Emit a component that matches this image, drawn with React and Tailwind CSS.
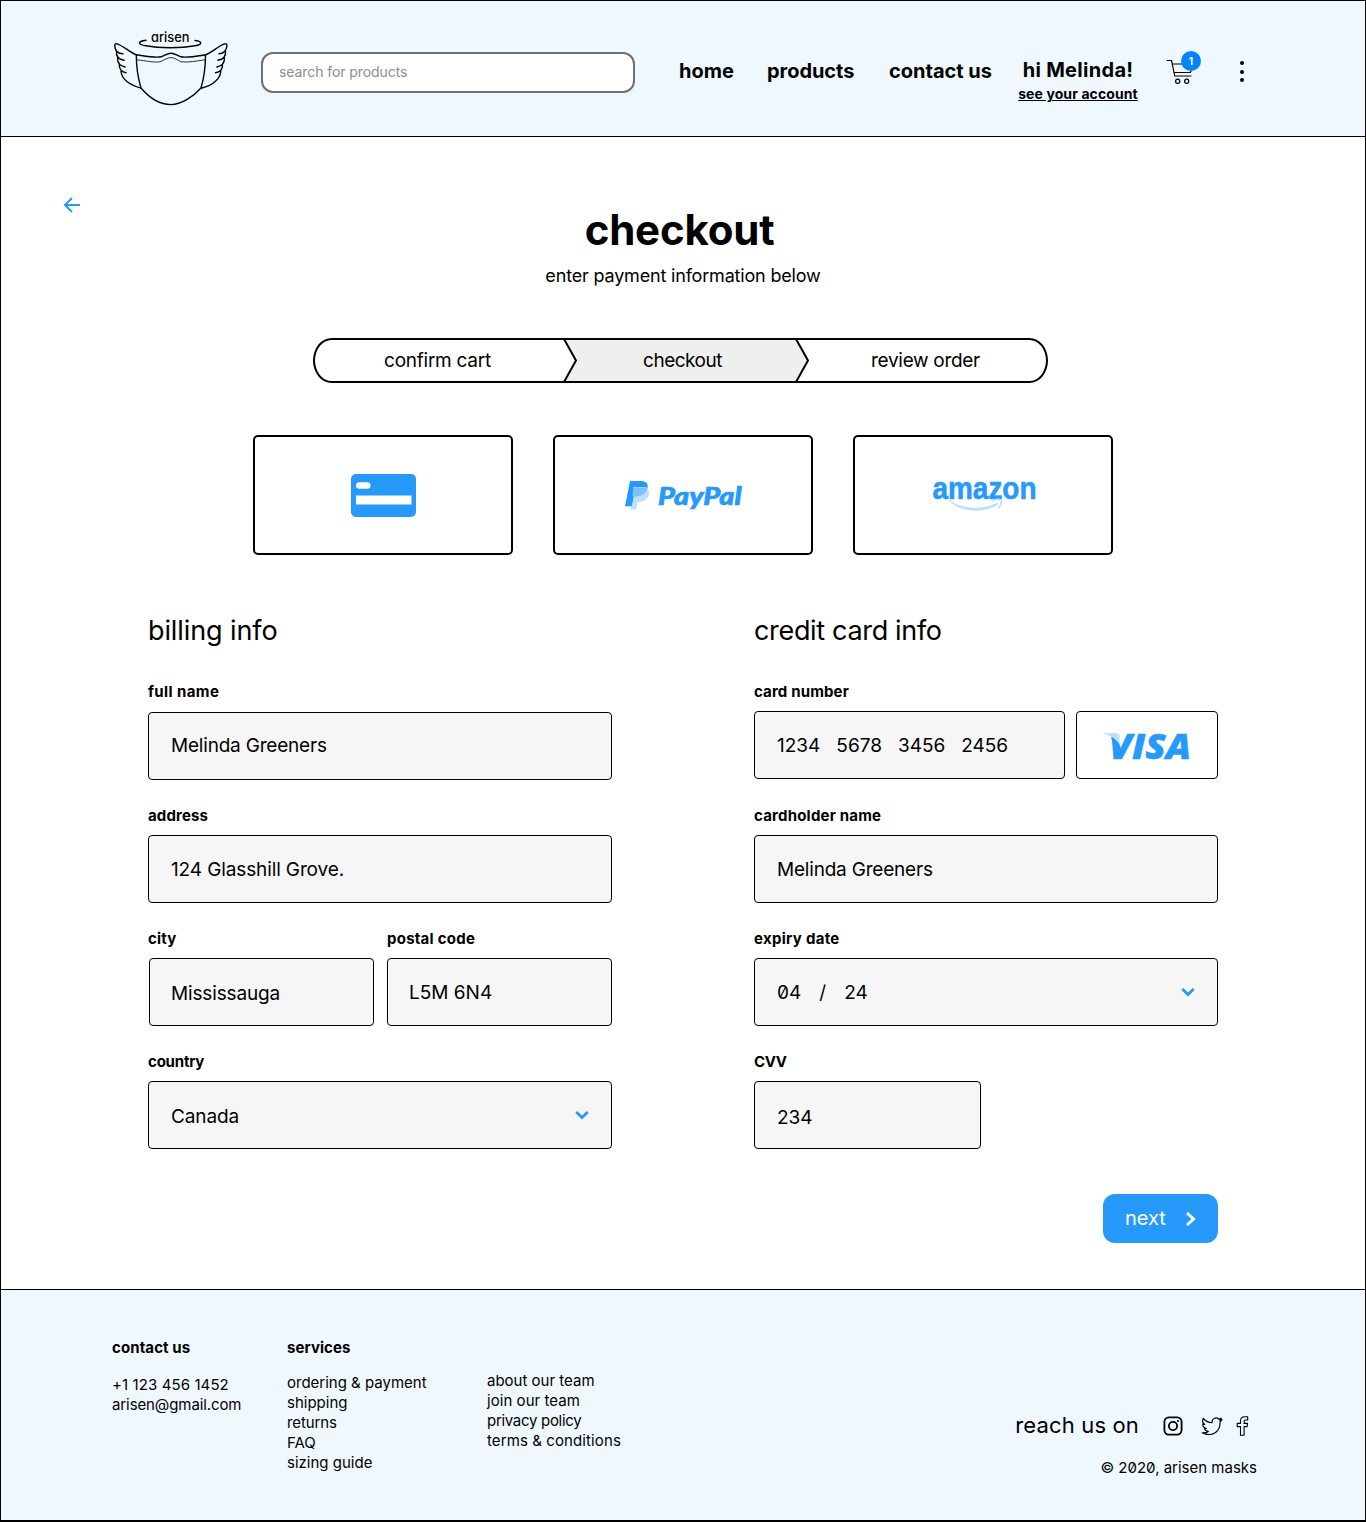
import React from "react";

function MaskLogo() {
  return (
    <svg width="118" height="78" viewBox="112 30 118 78" fill="none" stroke="#000" strokeWidth="1.4" strokeLinecap="round" strokeLinejoin="round">
      <path d="M146 40.3C137 41.5 137.500 44.500 146 45.800C159 48.300 181 48.300 195 45.800C203 44.300 202.500 41.500 195 40.500" />
      <text className="[font-feature-settings:'cv11']" x="151" y="42" fill="#000" stroke="none" fontFamily="Inter, sans-serif" fontSize="13" fontWeight="500" textLength="38.500" lengthAdjust="spacingAndGlyphs">arisen</text>
      <path d="M136.300 54.800C148 56.500 156 58 161 56.800C165 55.500 167 53.200 171 53.200C175 53.200 177 55.500 181 56.800C187 58 195 56.500 205.500 54.800C205.500 68 204 78 201 88C193 97 181 104.600 171 104.600C160 104.600 149 97.500 141 88C138 78 136.300 68 136.300 54.800Z" />
      <path strokeWidth="0.8" d="M137 59.800C147 61 155 62.700 160 61.800C165 60 167 57.600 171 57.600C175 57.600 177 60 181 61.800C188 62.700 196 61 205 59.800" />
      <path d="M136.300 54.800C129 52 122 44.500 116 43.600C114 44 114.500 48.500 117 51.500C118.500 53.200 121 53.800 123 53.800M116.500 51.500C116 55.500 118 59 124 60.300M117.500 58C117.500 62.500 120 66 125 67M119.200 65C119.500 69.500 121.500 72 126 72.700M121 71.500C122 80 130 85 141 88.200" />
      <path d="M205.500 54.800C213 52 220 44.500 225.500 43.600C228 44 227 48.500 224.500 51.500C223 53.200 221 53.800 219 53.800M225.500 51.500C226 55.500 224 59 218 60.300M224.500 58C224.500 62.500 222 66 217 67M222.500 65C222.500 69.500 220.500 72 215.500 72.700M220.800 71.500C220 80 211 86 201 88.200" />
    </svg>
  );
}

function Cart() {
  return (
    <svg width="28" height="26" viewBox="0 0 28 26" fill="none" stroke="#000" strokeWidth="1.200" strokeLinecap="round">
      <path d="M1 2.500H5.500L8.800 18H25M6.700 6H16M8 14.500H24.500L25 13" />
      <circle cx="11.700" cy="23.300" r="2.100" />
      <circle cx="20.700" cy="23.300" r="2.100" />
    </svg>
  );
}

function Chevron() {
  return (
    <svg className="shrink-0" width="14" height="10" viewBox="0 0 14 10" fill="none" stroke="#2699fb" strokeWidth="2.800">
      <path d="M1.300 2L7 7.500L12.700 2" />
    </svg>
  );
}

function StepArrow({ fill, className }) {
  return (
    <svg className={"block shrink-0 overflow-visible " + className} width="14" height="41" viewBox="0 0 14 41">
      <path d="M0 0H1.500L13 20.500L1.500 41H0Z" fill={fill} />
      <path d="M1 -1L13 20.500L1 42" fill="none" stroke="#000" strokeWidth="2" />
    </svg>
  );
}

function CreditCard() {
  return (
    <svg width="65" height="43" viewBox="0 0 65 43">
      <rect width="65" height="43" rx="5" fill="#2699fb" />
      <rect x="5" y="8.300" width="14.500" height="6.500" rx="3.200" fill="#fff" />
      <rect x="5" y="21.500" width="55.500" height="9" fill="#fff" />
    </svg>
  );
}

function PayPal() {
  return (
    <svg className="overflow-visible" width="118" height="34" viewBox="624 479 118 34">
      <path d="M630 481H641C647 481 649 485 647 489.500C645.500 494 642 496.500 636.500 496.500H634L632 506.300H625Z" fill="#2699fb" />
      <path d="M633.500 487H645.500C649.500 489 650 494 648 497C646 500.500 642.500 502 638.500 502H637.500L636 509.500H630.500L631 506.300H632L634 496.500Z" fill="#bcdfff" />
      <path d="M633.300 487.500H647.300C647.300 492 643 496.500 636.500 496.500H632.500Z" fill="#7dc1fb" />
      <text x="658" y="505" fill="#2699fb" stroke="#2699fb" strokeWidth="0.7" fontFamily="Lato, sans-serif" fontWeight="900" fontStyle="italic" fontSize="24" textLength="83.500" lengthAdjust="spacingAndGlyphs">PayPal</text>
    </svg>
  );
}

function Amazon() {
  return (
    <svg className="overflow-visible" width="104" height="40" viewBox="931 473 104 40">
      <text x="931.500" y="497.500" fill="#2699fb" stroke="#2699fb" strokeWidth="0.6" fontFamily="Liberation Sans, sans-serif" fontWeight="700" fontSize="31" textLength="104" lengthAdjust="spacingAndGlyphs">amazon</text>
      <path d="M947.500 499C961 508 981 509.500 995.500 502C997 501.500 997.800 503 996.500 504C982 512.500 961 512 947.500 499.800Z" fill="#bcdfff" />
      <path d="M991.500 500C994 498.200 998 498 1000 498.900C1001 501 999.500 505 997.500 507" stroke="#bcdfff" strokeWidth="1.800" fill="none" />
    </svg>
  );
}

function Visa() {
  return (
    <svg className="overflow-visible" width="88" height="28" viewBox="1103 732 88 28">
      <text x="1109" y="759" fill="#2699fb" stroke="#2699fb" strokeWidth="0.5" fontFamily="Open Sans, sans-serif" fontWeight="800" fontStyle="italic" fontSize="36" textLength="82" lengthAdjust="spacingAndGlyphs">VISA</text>
      <path d="M1109 731H1118.500L1121 748C1118 741 1114 737 1109 735Z" fill="#fff" />
      <path d="M1103 733H1115C1117 733 1118 734 1118.500 736L1121 747C1118 740 1112 735.500 1103 733.600Z" fill="#bcdfff" />
      <path d="M1111 737C1116 739.500 1119 743 1121 748L1120 758H1117Z" fill="#2699fb" />
    </svg>
  );
}

function Field({ label, labelClass, value, valueClass = "", boxClass = "mt-[9px]", className = "", chevron }) {
  return (
    <div className={className}>
      <div className={"h-5 text-[15px] font-bold leading-5 " + labelClass}>{label}</div>
      <div className={"flex h-[68px] items-center justify-between rounded border border-black bg-[#f6f6f6] pl-[22px] pr-[22px] text-[19px] leading-7 " + boxClass}>
        <span className={valueClass}>{value}</span>
        {chevron && <Chevron />}
      </div>
    </div>
  );
}

function Header() {
  return (
    <header className="flex h-[136px] items-start whitespace-nowrap border-b border-black bg-[#f0f8ff] pl-[111px] font-bold">
      <div className="mt-[29px]"><MaskLogo /></div>
      <div className="ml-[31px] mt-[51px] flex h-[41px] w-[374px] items-center rounded-xl border-2 border-[#707070] bg-white pb-0.5 pl-4 text-sm font-normal tracking-[-0.08px] text-[#8e8e8e]">
        search for products
      </div>
      <nav className="ml-[44px] mt-[56px] flex text-xl leading-7">
        <a className="w-[88px]">home</a>
        <a className="w-[122px] tracking-[-0.05px]">products</a>
        <a className="w-[129px]">contact us</a>
      </nav>
      <div className="mt-[55px] flex w-[120px] flex-col items-center">
        <div className="text-xl leading-7 tracking-[0.3px]">hi Melinda!</div>
        <a className="text-sm leading-5 tracking-[0.1px] underline underline-offset-1">see your account</a>
      </div>
      <div className="relative ml-[28px] mt-[57px]">
        <Cart />
        <span className="absolute left-[15px] top-[-7px] flex size-5 items-center justify-center rounded-full bg-[#0084ff] text-[10px] text-white">1</span>
      </div>
      <div className="ml-[46px] mt-[60px] flex flex-col gap-[4.5px]">
        <i className="size-1 rounded-full bg-black" />
        <i className="size-1 rounded-full bg-black" />
        <i className="size-1 rounded-full bg-black" />
      </div>
    </header>
  );
}

function Steps() {
  return (
    <div className="ml-[312px] mt-[50px] flex h-[45px] w-[735px] items-center rounded-[19px/23px] border-2 border-black text-[19px]">
      <div className="w-[248px] pr-[3px] pt-0.5 text-center tracking-[-0.25px]">confirm cart</div>
      <StepArrow fill="#fff" className="bg-[#efefef]" />
      <div className="flex h-full w-[218px] items-center justify-center bg-[#efefef] pr-[7px] pt-0.5 tracking-[-0.5px]">checkout</div>
      <StepArrow fill="#efefef" className="bg-white" />
      <div className="flex-1 pr-[4px] pt-0.5 text-center tracking-[-0.3px]">review order</div>
    </div>
  );
}

function Footer() {
  return (
    <footer className="flex h-[231px] whitespace-nowrap border-t border-black bg-[#f0f8ff] pl-[111px] text-[15px] leading-5">
      <div className="w-[175px] pt-12">
        <div className="font-bold tracking-[0.1px]">contact us</div>
        <div className="mt-[17px] tracking-[0.1px]">+1 123 456 1452</div>
        <div className="tracking-[-0.1px]">arisen@gmail.com</div>
      </div>
      <div className="w-[200px] pt-12">
        <div className="font-bold tracking-[0.07px]">services</div>
        <div className="mt-[15px]">ordering &amp; payment</div>
        <div>shipping</div>
        <div className="tracking-[-0.1px]">returns</div>
        <div>FAQ</div>
        <div>sizing guide</div>
      </div>
      <div className="pt-[81px]">
        <div>about our team</div>
        <div className="tracking-[0.05px]">join our team</div>
        <div className="tracking-[-0.3px]">privacy policy</div>
        <div className="tracking-[0.1px]">terms &amp; conditions</div>
      </div>
      <div className="ml-auto mr-[108px] pt-[120px]">
        <div className="flex h-8 items-center justify-end pr-[8px]">
          <span className="-mt-0.5 mr-[24px] text-[22px] tracking-[0.15px]">reach us on</span>
          <svg width="20" height="20" viewBox="0 0 20 20" fill="none" stroke="#000" strokeWidth="1.800">
            <rect x="1.400" y="1.400" width="17.200" height="17.200" rx="4.500" />
            <circle cx="10" cy="10" r="4.100" />
            <circle cx="15" cy="5" r="1.100" fill="#000" stroke="none" />
          </svg>
          <svg className="ml-[18px]" width="22" height="18" viewBox="0 0 22 18" fill="none" stroke="#000" strokeWidth="1.200" strokeLinejoin="round">
            <path d="M21 2.700L18.800 3.200L20.200 1.200L17.700 2.100C15 -.3 10.600 1.500 11 5.700C7.500 5.600 4.500 4 2.300 1.500C1.200 3.500 1.500 6 3.700 7.500L1.700 7C1.700 9.300 3.200 10.900 5.300 11.500L3.400 11.600C4 13.300 5.500 14.300 7.300 14.400C5.500 15.700 3.500 16.100 1.200 15.800C10 20.500 19.700 15 19 5Z" />
          </svg>
          <svg className="ml-[13px]" width="13" height="20" viewBox="0 0 13 20" fill="none" stroke="#000" strokeWidth="1.100" strokeLinejoin="round">
            <path d="M11.700 .8V4H9.600C8.400 4 8.100 4.500 8.100 5.500V7.400H11.500L11.100 10.600H8.100V19.200H4.500V10.600H1.200V7.400H4.500V4.800C4.500 2.200 6 .8 8.700 .8Z" />
          </svg>
        </div>
        <div className="mt-4 text-right slashed-zero">© 2020, arisen masks</div>
      </div>
    </footer>
  );
}

export default function App() {
  return (
    <div className="h-[1522px] w-[1366px] overflow-hidden border border-b-2 border-black bg-white font-['Inter',sans-serif] text-black">
      <Header />
      <main className="h-[1152px]">
        <div className="flex h-[67px] items-end pl-[62px]">
          <svg className="-mb-[10px]" width="18" height="18" viewBox="0 0 18 18" fill="none" stroke="#2699fb" strokeWidth="2">
            <path d="M9 2L2 9L9 16M2 9H17" />
          </svg>
        </div>
        <h1 className="-mt-0.5 pr-[7px] text-center text-[42px] font-bold leading-[56px] tracking-[-0.2px]">checkout</h1>
        <p className="mt-[6px] text-center text-[18px] leading-6 tracking-[-0.18px]">enter payment information below</p>
        <Steps />
        <div className="ml-[252px] mt-[52px] flex gap-10">
          <div className="flex h-[120px] w-[260px] items-center justify-center rounded-[5px] border-2 border-black pt-px"><CreditCard /></div>
          <div className="flex h-[120px] w-[260px] items-center justify-center rounded-[5px] border-2 border-black pt-[2px]"><PayPal /></div>
          <div className="flex h-[120px] w-[260px] items-center justify-center rounded-[5px] border-2 border-black pl-0.5 pb-0.5"><Amazon /></div>
        </div>
        <div className="ml-[147px] mt-[59px] flex gap-[142px]">
          <section className="w-[464px]">
            <h2 className="mb-[35px] h-[33px] text-[27px] leading-[33px] tracking-[-0.1px]">billing info</h2>
            <Field label="full name" labelClass="tracking-[0.4px]" value="Melinda Greeners" valueClass="tracking-[-0.2px]" boxClass="mt-[10px]" />
            <Field className="mt-[26px]" label="address" labelClass="tracking-[0.15px]" value="124 Glasshill Grove." valueClass="pt-0.5 tracking-[-0.12px]" />
            <div className="mt-[26px] flex">
              <Field className="w-[239px]" label="city" labelClass="tracking-[0.2px]" value="Mississauga" valueClass="-ml-px pt-1 tracking-[-0.15px]" boxClass="mt-[9px] ml-px w-[225px]" />
              <Field className="w-[225px]" label="postal code" labelClass="tracking-[0.25px]" value="L5M 6N4" valueClass="-ml-px pt-0.5" />
            </div>
            <Field className="mt-[26px]" label="country" labelClass="tracking-[-0.2px]" value="Canada" valueClass="pt-1 tracking-[-0.1px]" chevron />
          </section>
          <section className="w-[464px]">
            <h2 className="mb-[35px] h-[33px] text-[27px] leading-[33px] tracking-[-0.33px]">credit card info</h2>
            <div className="flex items-end justify-between">
              <Field className="w-[311px]" label="card number" labelClass="tracking-[0.15px]" value={<><span>1234</span><span>5678</span><span>3456</span><span>2456</span></>} valueClass="flex gap-4 pt-0.5" />
              <div className="flex h-[68px] w-[142px] items-center justify-center rounded border border-black pt-0.5"><Visa /></div>
            </div>
            <Field className="mt-[27px]" label="cardholder name" labelClass="tracking-[0.2px]" value="Melinda Greeners" valueClass="pt-0.5 tracking-[-0.2px]" />
            <Field className="mt-[26px]" label="expiry date" labelClass="tracking-[0.3px]" value={<><span>04</span><span>/</span><span>24</span></>} valueClass="flex gap-[18px] pt-0.5 slashed-zero" chevron />
            <Field className="mt-[26px] w-[227px]" label="CVV" labelClass="tracking-[-0.4px]" value="234" valueClass="pt-1.5" />
            <button className="ml-auto mt-[45px] flex h-[49px] w-[115px] items-center rounded-xl bg-[#2699fb] pl-[22px] text-xl text-white">
              <span className="pb-0.5">next</span>
              <svg className="ml-[19px]" width="12" height="16" viewBox="0 0 12 16" fill="none" stroke="#fff" strokeWidth="3">
                <path d="M2 2L8.500 8L2 14" />
              </svg>
            </button>
          </section>
        </div>
      </main>
      <Footer />
    </div>
  );
}
